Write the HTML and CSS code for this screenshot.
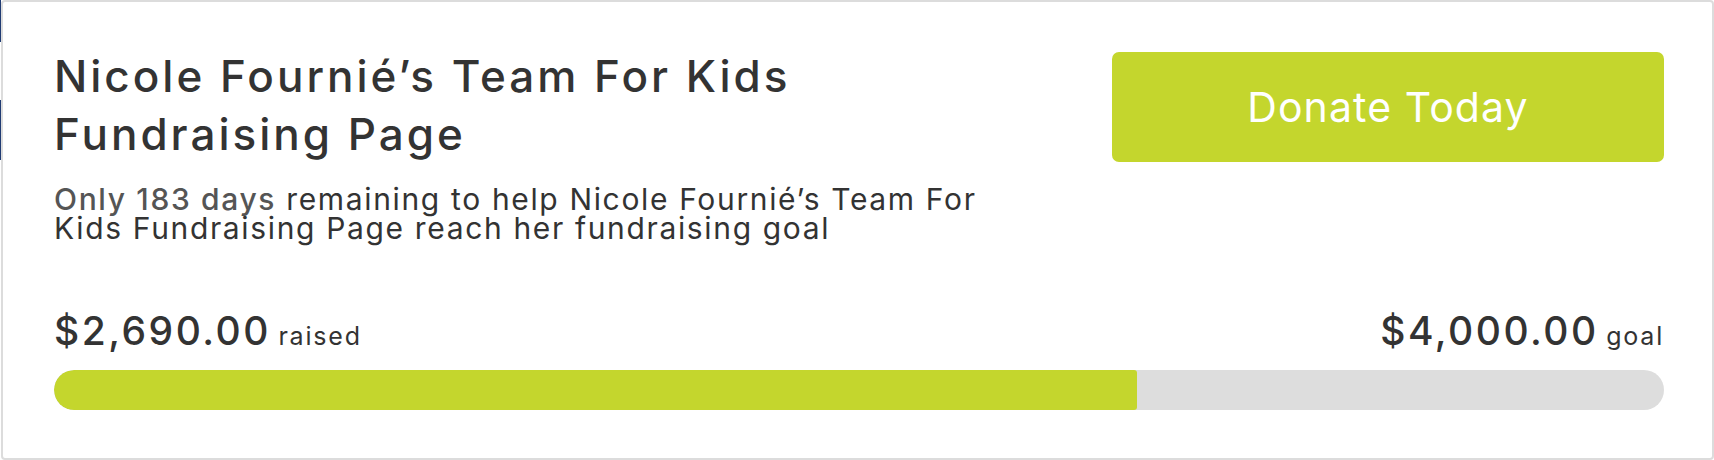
FILE: index.html
```html
<!DOCTYPE html>
<html lang="en">
<head>
<meta charset="utf-8">
<title>Nicole Fournié’s Team For Kids Fundraising Page</title>
<link rel="stylesheet" href="styles.css">
</head>
<body>
<div class="card">
  <div class="top">
    <div class="intro">
      <h1 class="title">Nicole Fournié’s Team For Kids Fundraising Page</h1>
      <p class="sub"><span class="days">Only 183 days</span> remaining to help Nicole Fournié’s Team For Kids Fundraising Page reach her fundraising goal</p>
    </div>
    <a class="btn" href="#">Donate Today</a>
  </div>
  <div class="amounts">
    <div class="raised"><span class="num">$2,690.00</span> <span class="lbl">raised</span></div>
    <div class="goal"><span class="num">$4,000.00</span> <span class="lbl">goal</span></div>
  </div>
  <div class="bar"><div class="fill" style="width: 67.25%"></div></div>
</div>
</body>
</html>
```
FILE: styles.css
```css
html {
  background: linear-gradient(to bottom, #1f3b73 0, #1f3b73 42px, #fff 42px, #fff 100px, #1f3b73 100px, #1f3b73 160px, #fff 160px) no-repeat 0 0 / 1px 100%;
  background-color: #fff;
}
body {
  margin: 0;
  padding-left: 1px;
  font-family: Inter, "Open Sans", "Liberation Sans", sans-serif;
  color: #333;
}
.card {
  box-sizing: border-box;
  height: 460px;
  border: 2px solid #dcdcdc;
  border-radius: 4px;
  background: #fff;
  padding: 45px 48px 0 51px;
}
.top {
  display: flex;
  justify-content: space-between;
  align-items: flex-start;
}
.intro {
  width: 950px;
}
.title {
  margin: 0;
  font-size: 44px;
  font-weight: 550;
  line-height: 58px;
  letter-spacing: 3px;
  width: 820px;
  color: #333;
}
.sub {
  margin: 22px 0 0;
  font-size: 30px;
  line-height: 29px;
  letter-spacing: 1.65px;
  color: #333;
}
.days {
  color: #555;
  font-weight: 500;
}
.btn {
  margin-top: 5px;
  width: 552px;
  height: 110px;
  display: flex;
  align-items: center;
  justify-content: center;
  background: #c4d62d;
  color: #fff;
  font-size: 41px;
  letter-spacing: 1.1px;
  text-decoration: none;
  border-radius: 7px;
}
.amounts {
  display: flex;
  justify-content: space-between;
  align-items: baseline;
  margin-top: 66px;
  line-height: 44px;
}
.num {
  font-size: 39px;
  font-weight: 500;
  letter-spacing: 2.5px;
}
.lbl {
  font-size: 25px;
  letter-spacing: 1.8px;
  margin-left: 3px;
}
.bar {
  margin-top: 9px;
  height: 40px;
  border-radius: 20px;
  background: #dddddd;
  overflow: hidden;
}
.fill {
  height: 100%;
  background: #c4d62d;
  border-radius: 20px 3px 3px 20px;
}
```
